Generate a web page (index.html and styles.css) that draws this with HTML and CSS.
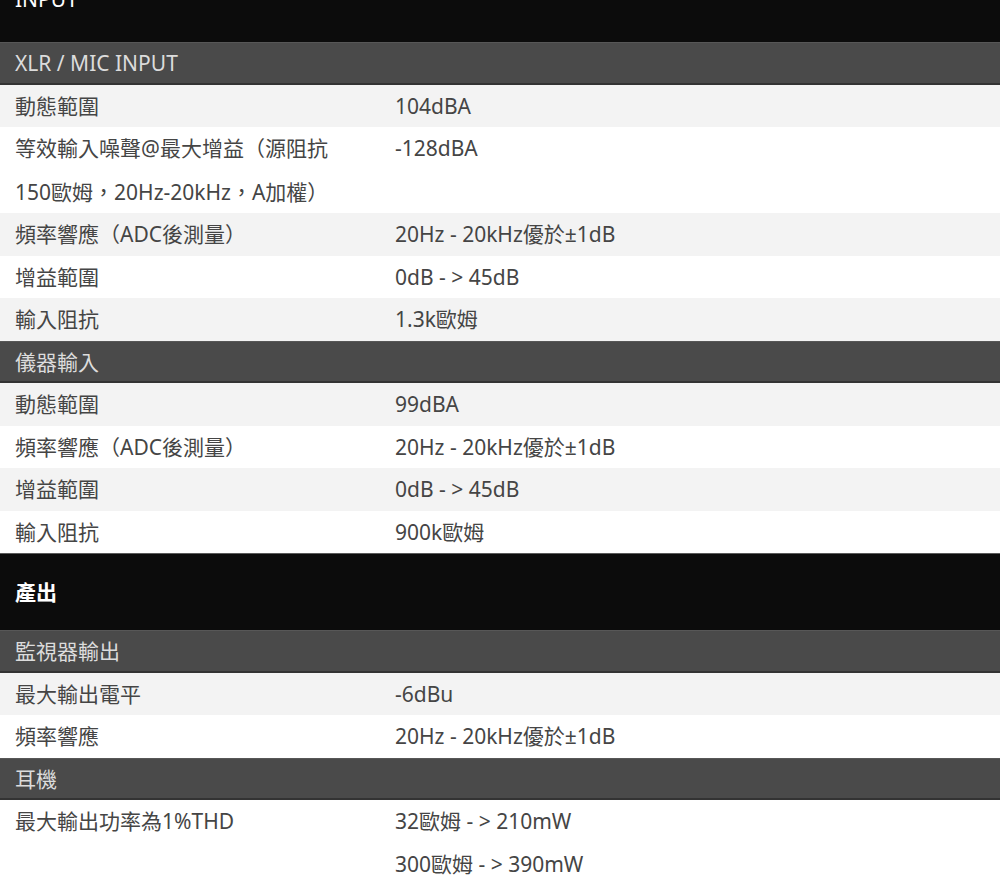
FILE: index.html
```html
<!DOCTYPE html>
<html lang="zh-Hant">
<head>
<meta charset="utf-8">
<title>Specs</title>
<link rel="stylesheet" href="styles.css">
</head>
<body>
<div class="specs">
  <div class="title first">INPUT</div>
  <div class="group">XLR / MIC INPUT</div>
  <div class="row alt"><div class="label">動態範圍</div><div class="value">104dBA</div></div>
  <div class="row"><div class="label">等效輸入噪聲@最大增益（源阻抗<br>150歐姆<span class="jp">，</span>20Hz-20kHz<span class="jp">，</span>A加權）</div><div class="value">-128dBA</div></div>
  <div class="row alt"><div class="label">頻率響應（ADC後測量）</div><div class="value">20Hz - 20kHz優於±1dB</div></div>
  <div class="row"><div class="label">增益範圍</div><div class="value">0dB - &gt; 45dB</div></div>
  <div class="row alt"><div class="label">輸入阻抗</div><div class="value">1.3k歐姆</div></div>
  <div class="group">儀器輸入</div>
  <div class="row alt"><div class="label">動態範圍</div><div class="value">99dBA</div></div>
  <div class="row"><div class="label">頻率響應（ADC後測量）</div><div class="value">20Hz - 20kHz優於±1dB</div></div>
  <div class="row alt"><div class="label">增益範圍</div><div class="value">0dB - &gt; 45dB</div></div>
  <div class="row"><div class="label">輸入阻抗</div><div class="value">900k歐姆</div></div>
  <div class="title">產出</div>
  <div class="group">監視器輸出</div>
  <div class="row alt"><div class="label">最大輸出電平</div><div class="value">-6dBu</div></div>
  <div class="row"><div class="label">頻率響應</div><div class="value">20Hz - 20kHz優於±1dB</div></div>
  <div class="group">耳機</div>
  <div class="row"><div class="label">最大輸出功率為1%THD</div><div class="value">32歐姆 - &gt; 210mW<br>300歐姆 - &gt; 390mW</div></div>
</div>
</body>
</html>
```
FILE: styles.css
```css
html, body {
  margin: 0;
  padding: 0;
  background: #ffffff;
}
body {
  font-family: "Noto Sans", "Noto Sans CJK TC", sans-serif;
  font-size: 21px;
  color: #454545;
  overflow: hidden;
}
.specs {
  margin-top: -35px;
  display: flex;
  flex-direction: column;
}
.title {
  background: #0c0c0c;
  color: #ffffff;
  font-weight: 700;
  height: 77px;
  line-height: 77px;
  padding-left: 15px;
  border-top: 1px solid #5a5a5a;
  box-sizing: border-box;
}
.title.first {
  line-height: 67px;
  font-weight: 400;
}
.group {
  background: #4a4a4a;
  color: #dcdcdc;
  height: 42.5px;
  line-height: 40px;
  padding-left: 15px;
  box-sizing: border-box;
  border-top: 1px solid #575757;
  border-bottom: 2px solid #333333;
}
.row {
  display: grid;
  grid-template-columns: 380px 1fr;
  padding-left: 15px;
  line-height: 42.5px;
  background: #ffffff;
}
.row.alt {
  background: #f3f3f3;
}
.label, .value {
  white-space: nowrap;
}
.jp {
  font-family: "Noto Sans CJK JP", sans-serif;
}
```
